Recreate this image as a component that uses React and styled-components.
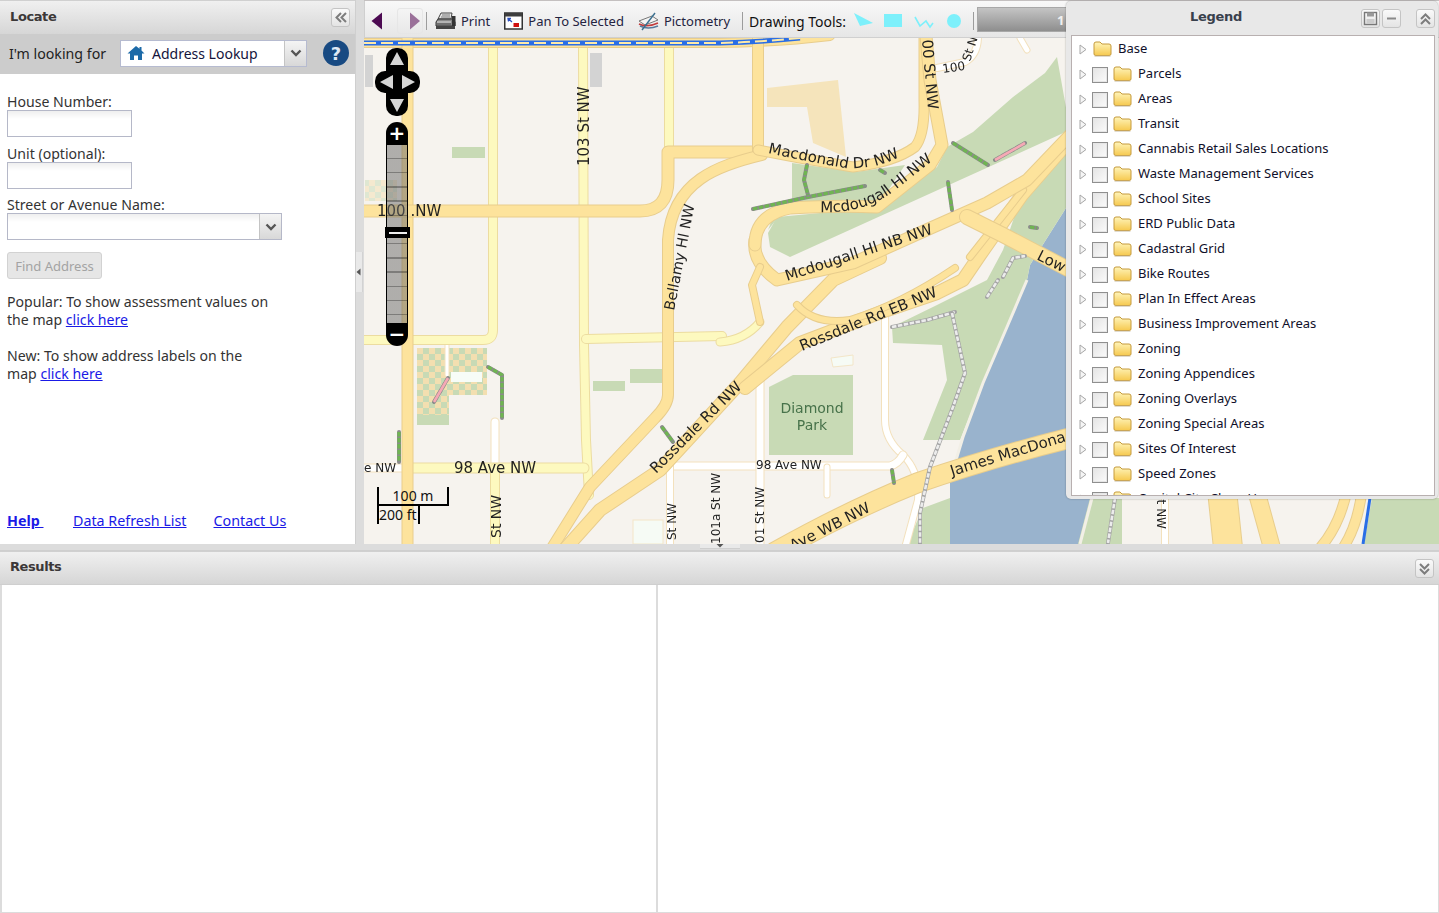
import React from 'react'
import styled, { createGlobalStyle } from 'styled-components'

const UI_FONT = '"Noto Sans", "DejaVu Sans", sans-serif'
const MAP_FONT = '"DejaVu Sans", sans-serif'

const legendLayers = [
    'Parcels',
    'Areas',
    'Transit',
    'Cannabis Retail Sales Locations',
    'Waste Management Services',
    'School Sites',
    'ERD Public Data',
    'Cadastral Grid',
    'Bike Routes',
    'Plan In Effect Areas',
    'Business Improvement Areas',
    'Zoning',
    'Zoning Appendices',
    'Zoning Overlays',
    'Zoning Special Areas',
    'Sites Of Interest',
    'Speed Zones',
    'Capital City Clean Up',
]

const GlobalStyle = createGlobalStyle`
    html, body {
        margin: 0;
        padding: 0;
        background: #dcdcdc;
    }

    body {
        font-family: ${UI_FONT};
        font-size: 14px;
        overflow: hidden;
    }
`

const Page = styled.div`
    width: 1439px;
    height: 913px;
    display: flex;
    flex-direction: column;
    background: #dcdcdc;
`

const TopRow = styled.div`
    height: 544px;
    display: flex;
    flex: none;
`

const LeftPanel = styled.aside`
    width: 356px;
    flex: none;
    display: flex;
    flex-direction: column;
    background: #fff;
    border-right: 1px solid #cfcfcf;
    box-sizing: border-box;
`

const PanelHeader = styled.div`
    height: ${p => p.$height || 34}px;
    flex: none;
    box-sizing: border-box;
    display: flex;
    align-items: center;
    justify-content: space-between;
    padding: 0 5px 0 10px;
    background: linear-gradient(#f0f0f0, #d6d6d6);
    border-top: 1px solid #d0d0d0;
`

const PanelTitle = styled.span`
    font-family: "DejaVu Sans", sans-serif;
    font-size: 13px;
    font-weight: bold;
    letter-spacing: -0.4px;
    color: #3c3838;
    padding-bottom: 3px;
`

const IconButton = styled.button`
    width: 19px;
    height: 19px;
    padding: 0;
    display: flex;
    align-items: center;
    justify-content: center;
    flex: none;
    background: linear-gradient(#fafafa, #e4e4e4);
    border: 1px solid #c4c4c4;
    border-radius: 3px;
    margin-left: ${p => p.$ml || 0}px;
`

const LookingBar = styled.div`
    height: 40px;
    flex: none;
    display: flex;
    align-items: center;
    background: #cccccc;
    padding: 0 0 2px 9px;
    box-sizing: border-box;
    color: #222;
    font-size: 14.2px;
`

const LookingLabel = styled.span`
    width: 111px;
    flex: none;
`

const LookupSelect = styled.div`
    width: 187px;
    height: 27px;
    display: flex;
    align-items: center;
    box-sizing: border-box;
    background: #fff;
    border: 1px solid #b6bbd0;
    padding-left: 6px;
    gap: 7px;
    color: #14143c;
`

const LookupText = styled.span`
    flex: 1;
    font-size: 14px;
`

const DropButton = styled.div`
    width: 22px;
    height: 100%;
    flex: none;
    display: flex;
    align-items: center;
    justify-content: center;
    box-sizing: border-box;
    background: linear-gradient(#f4f4f4, #d8d8d8);
    border-left: 1px solid #c4c4c4;
`

const HelpBadge = styled.div`
    width: 26px;
    height: 26px;
    border-radius: 50%;
    margin-left: 16px;
    background: #184a82;
    color: #dfe9f5;
    font-family: "DejaVu Sans", sans-serif;
    font-size: 18px;
    font-weight: bold;
    display: flex;
    align-items: center;
    justify-content: center;
`

const FormBody = styled.div`
    flex: 1;
    display: flex;
    flex-direction: column;
    padding: 20px 0 0 7px;
    color: #333;
    font-size: 14.1px;
`

const FieldLabel = styled.label`
    display: block;
    height: 16px;
    line-height: 16px;
`

const TextField = styled.div`
    width: ${p => p.$width || 125}px;
    height: 27px;
    flex: none;
    box-sizing: border-box;
    border: 1px solid #b5b8c8;
    background: linear-gradient(#efefef, #fff 8px);
    margin-bottom: ${p => p.$mb || 8}px;
    display: flex;
    justify-content: flex-end;
`

const FindButton = styled.button`
    width: 95px;
    height: 27px;
    flex: none;
    padding: 0;
    margin: 4px 0 14px;
    font-family: ${UI_FONT};
    font-size: 13px;
    color: #a3a3a3;
    background: #e6e6e6;
    border: 1px solid #d2d2d2;
    border-radius: 3px;
`

const Note = styled.p`
    width: 264px;
    margin: 0 0 18px;
    line-height: 18px;
`

const TextLink = styled.a`
    color: #1a1ae6;
    text-decoration: underline;
    font-weight: ${p => (p.$bold ? 'bold' : 'normal')};
`

const FooterLinks = styled.div`
    margin-top: auto;
    padding-bottom: 14px;
    display: flex;
    gap: 27px;
    font-size: 14.3px;
    line-height: 18px;
`

const HelpLink = styled(TextLink)`
    width: 39px;
`

const VerticalSplit = styled.div`
    width: 8px;
    flex: none;
    display: flex;
    align-items: center;
    background: #dcdcdc;
`

const SplitHandle = styled.div`
    width: 6px;
    height: 40px;
    display: flex;
    align-items: center;
    background: #e9e9e9;
    border-right: 1px solid #d2d2d2;
`

const MapPanel = styled.section`
    flex: 1;
    min-width: 0;
    position: relative;
    display: flex;
    flex-direction: column;
    border-top: 1px solid #c4c0c0;
    box-sizing: border-box;
`

const Toolbar = styled.div`
    height: 37px;
    flex: none;
    display: flex;
    align-items: center;
    overflow: hidden;
    box-sizing: border-box;
    padding-top: 4px;
    background: linear-gradient(#f8f8f8, #e6e6e6);
    border-bottom: 1px solid #d0d0d0;
    border-left: 1px solid #cfcfcf;
    font-size: 13px;
    color: #23233f;
`

const ToolItem = styled.div`
    display: flex;
    align-items: center;
    gap: 5px;
    flex: none;
    margin-left: ${p => p.$ml || 0}px;
`

const NavGhostButton = styled.div`
    width: 26px;
    height: 26px;
    display: flex;
    align-items: center;
    justify-content: flex-end;
    padding-right: 1px;
    flex: none;
    margin-left: ${p => p.$ml || 0}px;
    box-sizing: border-box;
    border: 1px solid #e6e6e6;
    border-radius: 3px;
`

const ToolDivider = styled.div`
    width: 1px;
    height: 18px;
    flex: none;
    background: #9c9c9c;
    margin-left: ${p => p.$ml || 0}px;
`

const DrawingLabel = styled.span`
    margin-left: 6px;
    font-size: 14px;
    color: #111;
`

const ProgressBox = styled.div`
    width: 130px;
    height: 25px;
    flex: none;
    margin-left: 3px;
    margin-top: -3px;
    box-sizing: border-box;
    padding-left: 79px;
    background: linear-gradient(#c4c4c4, #8e8e8e);
    border: 1px solid #a8a8a8;
    color: #f0f0f0;
    font-weight: bold;
    line-height: 24px;
`

const MapArea = styled.div`
    flex: 1;
    min-height: 0;
    position: relative;
    overflow: hidden;
    background: #f6f3ee;
`

const MapDrawing = styled.svg`
    display: block;
    width: 100%;
    height: 100%;
    filter: blur(0.3px);
`

const NavControl = styled.svg`
    position: absolute;
    left: 11px;
    top: 10px;
`

const ZoomBar = styled.div`
    position: absolute;
    left: 22px;
    top: 84px;
    width: 22px;
    height: 224px;
    display: flex;
    flex-direction: column;
`

const ZoomCap = styled.div`
    height: 23px;
    flex: none;
    background: #000;
    color: #fff;
    font-family: "DejaVu Sans", sans-serif;
    font-size: 20px;
    font-weight: bold;
    line-height: 23px;
    text-align: center;
    border-radius: ${p => (p.$bottom ? '0 0 11px 11px' : '11px 11px 0 0')};
`

const ZoomTrack = styled.div`
    flex: 1;
    box-sizing: border-box;
    border-left: 1px solid #000;
    border-right: 1px solid #000;
    background: repeating-linear-gradient(
        rgba(105, 105, 105, 0.5) 0,
        rgba(105, 105, 105, 0.5) 12.8px,
        rgba(60, 60, 60, 0.65) 12.8px,
        rgba(60, 60, 60, 0.65) 14.2px
    );
`

const ZoomHandle = styled.div`
    position: absolute;
    left: -1px;
    top: 105px;
    width: 25px;
    height: 11px;
    background: #000;
    display: flex;
    align-items: center;
    justify-content: center;

    &::after {
        content: '';
        width: 18px;
        height: 2px;
        background: #eee;
    }
`

const ScaleLine = styled.div`
    position: absolute;
    left: 13px;
    top: 449px;
    font-size: 14px;
    line-height: 18px;
    color: #111;
`

const ScaleMetric = styled.div`
    width: 72px;
    height: 19px;
    box-sizing: border-box;
    border: 2px solid #000;
    border-top: none;
    text-align: center;
`

const ScaleImperial = styled.div`
    width: 43px;
    height: 18px;
    box-sizing: border-box;
    border: 2px solid #000;
    border-top: none;
    border-bottom: none;
    white-space: nowrap;
    overflow: hidden;
`

const LegendWindow = styled.div`
    position: absolute;
    left: 702px;
    top: 0;
    width: 372px;
    height: 498px;
    box-sizing: border-box;
    display: flex;
    flex-direction: column;
    padding: 0 3px 3px 5px;
    background: #e8e8e8;
    border-radius: 5px;
    box-shadow: 0 0 2px rgba(0, 0, 0, 0.35);
`

const LegendHeader = styled.div`
    height: 34px;
    flex: none;
    position: relative;
    display: flex;
    align-items: center;
    justify-content: flex-end;
`

const LegendTitle = styled.span`
    position: absolute;
    left: 119px;
    top: 8px;
    font-family: "DejaVu Sans", sans-serif;
    font-size: 13px;
    font-weight: bold;
    letter-spacing: -0.3px;
    color: #38404c;
`

const LegendBody = styled.div`
    flex: 1;
    min-height: 0;
    overflow: hidden;
    background: #fff;
    border: 1px solid #b8b0b0;
`

const LayerRow = styled.div`
    height: 25px;
    display: flex;
    align-items: center;
    padding-left: 7px;
    color: #10102a;
    font-size: 13px;
    white-space: nowrap;

    > svg:first-child {
        margin-top: 2px;
    }
`

const BaseSpacer = styled.span`
    width: 6px;
    flex: none;
`

const LayerCheck = styled.span`
    width: 16px;
    height: 16px;
    flex: none;
    margin: 2px 5px 0 5px;
    box-sizing: border-box;
    border: 1px solid #8f8f8f;
    background: linear-gradient(135deg, #e4e4e4, #fbfbfb);
    box-shadow: inset 0 0 0 1px #e6e6e6;
`

const LayerName = styled.span`
    margin-left: 6px;
    padding-bottom: 1px;
`

const HorizontalSplit = styled.div`
    height: 6px;
    flex: none;
    display: flex;
    justify-content: center;
`

const SplitGrip = styled.div`
    width: 40px;
    height: 4px;
    background: #e9e9e9;
    border-bottom: 1px solid #cfcfcf;
    display: flex;
    justify-content: center;
`

const ResultsPanel = styled.section`
    flex: 1;
    min-height: 0;
    display: flex;
    flex-direction: column;
    border-top: 1px solid #cfcfcf;
    padding-bottom: 1px;
`

const ResultsBody = styled.div`
    flex: 1;
    display: grid;
    grid-template-columns: 654px 1fr;
    gap: 2px;
    padding: 0 1px 0 2px;
    border-top: 1px solid #cfcfcf;
    background: #dcdcdc;
`

const ResultsPane = styled.div`
    background: #fff;
`

const ChevronsIcon = ({ dir }) => {
    const paths = {
        left: 'M8 3 L3.5 7.5 L8 12 M13 3 L8.5 7.5 L13 12',
        up: 'M3 8 L7.5 3.5 L12 8 M3 13 L7.5 8.5 L12 13',
        down: 'M3 3 L7.5 7.5 L12 3 M3 8 L7.5 12.5 L12 8',
    }
    return (
        <svg width='15' height='15' viewBox='0 0 15 15'>
            <path d={paths[dir]} fill='none' stroke='#7d7d7d' strokeWidth='2' />
        </svg>
    )
}

const DropArrow = () => (
    <svg width='12' height='8' viewBox='0 0 12 8'>
        <path d='M1.5 1.5 L6 6 L10.5 1.5' fill='none' stroke='#555' strokeWidth='2.4' />
    </svg>
)

const HomeIcon = () => (
    <svg width='18' height='16' viewBox='0 0 18 16'>
        <path d='M9 1 L0.5 8.5 L3 8.5 L3 15 L7 15 L7 10.5 L11 10.5 L11 15 L15 15 L15 8.5 L17.5 8.5 L14.5 5.5 L14.5 2 L12.5 2 L12.5 3.7 Z' fill='#1c6aa8' />
    </svg>
)

const ArrowLeftIcon = () => (
    <svg width='12' height='18' viewBox='0 0 12 18'>
        <path d='M11 0.5 L0.5 9 L11 17.5 Z' fill='#4c0a52' />
    </svg>
)

const ArrowRightIcon = () => (
    <svg width='12' height='18' viewBox='0 0 12 18'>
        <path d='M1 0.5 L11 9 L1 17.5 Z' fill='#9a7099' />
    </svg>
)

const PrintIcon = () => (
    <svg width='21' height='18' viewBox='0 0 21 18'>
        <path d='M6 1 L17 1 L16 7 L3 7 Z' fill='#e8e8e8' stroke='#444' />
        <path d='M7 3 L15 3 M6 5 L15 5' stroke='#777' />
        <path d='M3 7 L18 7 L20 10 L20 14 L1 14 L1 10 Z' fill='#8a8a8a' stroke='#333' />
        <rect x='17' y='4' width='3.5' height='10' fill='#333' />
        <rect x='1' y='14' width='19' height='3' fill='#444' />
        <path d='M2 10 L16 10' stroke='#ddd' />
        <path d='M2 12 L16 12' stroke='#555' />
    </svg>
)

const PanIcon = () => (
    <svg width='19' height='18' viewBox='0 0 19 18'>
        <rect x='0.75' y='1' width='17.5' height='16' fill='#fff' stroke='#333' strokeWidth='1.5' />
        <rect x='1' y='1' width='17' height='3.5' fill='#3d3d3d' />
        <path d='M4 6.5 L8 10 M4.5 9.5 L4 6.5 L7 6.5' stroke='#2a4fc0' fill='none' strokeWidth='1.3' />
        <rect x='9.5' y='11' width='5.5' height='4' fill='#d01010' />
    </svg>
)

const PictometryIcon = () => (
    <svg width='21' height='19' viewBox='0 0 21 19'>
        <path d='M1 9 L14 4 L20 8 L7 13 Z' fill='#f4f4f4' stroke='#777' />
        <path d='M1 12 Q9 16 20 11' fill='none' stroke='#c23b3b' strokeWidth='1.4' />
        <path d='M2 14 Q10 18 20 14' fill='none' stroke='#557a9c' strokeWidth='1.4' />
        <path d='M4 18 L17 1' stroke='#3a6f8f' strokeWidth='1.4' />
    </svg>
)

const DrawingTools = () => (
    <svg width='112' height='20' viewBox='0 0 112 20'>
        <path d='M0 2 L19 12 L6 15 Z' fill='#7df0fb' />
        <rect x='30' y='3' width='18' height='13' fill='#7df0fb' />
        <path d='M61 6 L66 15 L72 10 L76 16 L79 12' fill='none' stroke='#7df0fb' strokeWidth='1.6' />
        <circle cx='100' cy='10' r='7' fill='#7df0fb' />
    </svg>
)

const Folder = () => (
    <svg width='19' height='17' viewBox='0 0 19 17'>
        <defs>
            <linearGradient id='folderFill' x1='0' y1='0' x2='0' y2='1'>
                <stop offset='0' stopColor='#fff5bb' />
                <stop offset='1' stopColor='#f6c94f' />
            </linearGradient>
        </defs>
        <path d='M1 4 Q1 2 3 2 L7 2 L9 4 L16 4 Q18 4 18 6 L18 14 Q18 15.5 16 15.5 L3 15.5 Q1 15.5 1 14 Z' fill='url(#folderFill)' stroke='#c59a3c' />
        <path d='M1.5 16.3 L17.5 16.3' stroke='#d9d3c4' />
    </svg>
)

const TreeArrow = () => (
    <svg width='8' height='11' viewBox='0 0 8 11'>
        <path d='M1 1 L7 5.5 L1 10 Z' fill='#f6f6f6' stroke='#a6a6a6' />
    </svg>
)

const SaveIcon = () => (
    <svg width='15' height='15' viewBox='0 0 15 15'>
        <rect x='1.5' y='1.5' width='12' height='12' fill='none' stroke='#777' strokeWidth='1.4' />
        <rect x='4' y='1.5' width='7' height='4' fill='#999' />
        <rect x='3.5' y='8' width='8' height='5' fill='#ccc' />
    </svg>
)

const MinusIcon = () => (
    <svg width='15' height='15' viewBox='0 0 15 15'>
        <path d='M3 7.5 L12 7.5' stroke='#8a8a8a' strokeWidth='2' />
    </svg>
)

const Road = ({ d, w = 10, kind = 'major' }) => {
    const colors = {
        major: ['#e8cd8d', '#fde39c'],
        minor: ['#ecdca0', '#fdf9bf'],
        white: ['#f3e1bd', '#ffffff'],
    }
    const [casing, fill] = colors[kind]
    return (
        <>
            <path d={d} fill='none' stroke={casing} strokeWidth={w + 2} strokeLinejoin='round' strokeLinecap='round' />
            <path d={d} fill='none' stroke={fill} strokeWidth={w} strokeLinejoin='round' strokeLinecap='round' />
        </>
    )
}

const Trail = ({ d, kind = 'green' }) => {
    const colors = {
        green: ['#8b8b8b', '#6fb552'],
        grey: ['#a4a4a4', '#ececec'],
        pink: ['#8b8b8b', '#f6a9b5'],
    }
    const [edge, fill] = colors[kind]
    return (
        <>
            <path d={d} fill='none' stroke={edge} strokeWidth='4' strokeDasharray={kind === 'pink' ? '6 2' : 'none'} strokeLinecap='round' strokeLinejoin='round' />
            <path d={d} fill='none' stroke={fill} strokeWidth={kind === 'green' ? 3.2 : 2.6} strokeDasharray={kind === 'pink' ? 'none' : '4.5 1.5'} strokeLinejoin='round' />
        </>
    )
}

const MapLabel = ({ x, y, size = 15, rotate = 0, color = '#222', anchor = 'start', children }) => (
    <text
        x={x}
        y={y}
        fontSize={size}
        fill={color}
        textAnchor={anchor}
        transform={rotate ? `rotate(${rotate} ${x} ${y})` : undefined}
    >
        {children}
    </text>
)

const StreetMap = () => (
    <MapDrawing viewBox='364 38 1075 506' preserveAspectRatio='none' fontFamily={MAP_FONT}>
        <defs>
            <pattern id='schoolCheck' x='417' y='348' width='12' height='12' patternUnits='userSpaceOnUse'>
                <rect width='12' height='12' fill='#c8dab5' />
                <rect width='6' height='6' fill='#f3dfb0' />
                <rect x='6' y='6' width='6' height='6' fill='#f3dfb0' />
            </pattern>
            <path id='macdonaldCurve' d='M768 153 Q800 160 845 168 Q880 170 905 153' />
            <path id='mcdougallCurve' d='M820 212 Q860 214 890 194 L940 155' />
        </defs>

        <rect x='364' y='38' width='1075' height='506' fill='#f6f3ee' />

        {/* water and parks */}
        <path d='M1066 208 L1030 265 L1027 280 L1007 327 L983 383 L963 437 L950 480 L950 544 L1080 544 L1092 500 L1092 200 Z' fill='#99b3cd' />
        <path d='M1057 57 L1045 73 L1013 97 L973 132 L947 147 L937 167 L877 210 L820 213 L777 217 L768 233 L770 247 L790 257 L1070 130 Z' fill='#c8dab5' />
        <path d='M792 163 L855 172 L905 165 L877 207 L820 205 L775 212 L768 230 L792 200 Z' fill='#c8dab5' />
        <path d='M892 327 L937 305 L987 280 L1003 250 L1020 200 L1066 150 L1066 208 L1030 265 L1027 280 L1007 327 L983 383 L960 440 L923 440 L947 380 L942 345 L893 343 Z' fill='#c8dab5' />
        <path d='M769 387 L793 375 L853 375 L853 455 L769 455 Z' fill='#c8dab5' />
        <path d='M923 508 L950 498 L950 544 L907 544 Z' fill='#c8dab5' />
        <path d='M1090 498 L1122 498 L1122 544 L1078 544 Z' fill='#c8dab5' />
        <path d='M1372 498 L1439 498 L1439 544 L1364 544 Z' fill='#c8dab5' />
        <path d='M1027 280 L1007 327 L983 383 L963 437 L950 480' fill='none' stroke='#f2efe6' strokeWidth='3' />
        <path d='M1092 498 L1080 544' fill='none' stroke='#f2efe6' strokeWidth='3' />

        <path d='M767 88 L838 80 L846 157 L813 143 L807 107 L767 107 Z' fill='#f5e4bb' />
        <rect x='590' y='53' width='12' height='34' fill='#d3d3d3' />
        <rect x='365' y='55' width='8' height='32' fill='#d3d3d3' />
        <rect x='452' y='147' width='33' height='11' fill='#c8dab5' />
        <rect x='593' y='381' width='32' height='10' fill='#c8dab5' />
        <rect x='630' y='369' width='32' height='14' fill='#c8dab5' />
        <rect x='365' y='180' width='32' height='21' fill='url(#schoolCheck)' opacity='0.5' />
        <path d='M417 348 L487 348 L487 395 L449 395 L449 415 L417 415 Z' fill='url(#schoolCheck)' />
        <rect x='417' y='415' width='32' height='10' fill='#c8dab5' />
        <rect x='451' y='372' width='31' height='10' fill='#f7fcf7' />
        <rect x='633' y='520' width='30' height='24' fill='#f6fbf5' stroke='#f3e6c8' />
        <path d='M831 358 L853 355 L853 365 L833 367 Z' fill='#f6fbf5' stroke='#f3e6c8' />

        {/* local streets */}
        <Road d='M885 312 L885 420 Q885 440 903 455 Q920 472 918 500 L905 548' w={6} kind='white' />
        <Road d='M670 466 L890 466 Q898 464 903 455' w={7} kind='white' />
        <Road d='M760 378 L760 548' w={7} kind='white' />
        <Road d='M670 466 L670 548' w={6} kind='white' />
        <Road d='M827 467 L827 495' w={5} kind='white' />
        <Road d='M495 422 L495 465' w={7} kind='white' />
        <Road d='M447 345 L447 375' w={3} kind='white' />
        <Road d='M364 468 L402 468' w={7} kind='white' />
        <Road d='M937 68 L965 62 Q978 55 978 36' w={6} kind='white' />
        <Road d='M1020 38 L1027 50' w={5} kind='white' />
        <Road d='M1165 490 L1165 548' w={6} kind='white' />

        <Road d='M493 47 L493 330 Q493 340 483 340 L364 340' w={8} kind='minor' />
        <Road d='M583 47 L584 345 L586 440 L589 495' w={8} kind='minor' />
        <Road d='M669 38 L669 152' w={8} kind='minor' />
        <Road d='M586 339 L722 336' w={8} kind='minor' />
        <Road d='M413 468 L584 468' w={9} kind='minor' />
        <Road d='M495 468 L495 548' w={8} kind='minor' />
        <Road d='M720 342 Q745 340 760 322' w={7} kind='minor' />

        {/* arterial roads */}
        <Road d='M364 43 L720 43 Q780 42 830 36' w={8} />
        <Road d='M407.5 38 L407.5 548' w={10} />
        <Road d='M364 211 L640 211 Q668 211 668 180 L668 152 L762 152' w={11} />
        <Road d='M758 38 L758 152' w={10} />
        <Road d='M762 155 C720 165 672 180 668 240 L668 395 Q668 405 655 418 L590 487 L552 548' w={10} />
        <Road d='M566 548 L600 510 L660 470 L740 383 L787 327 L833 280 L880 258' w={12} />
        <Road d='M745 388 L800 343 L887 310 L937 293 L963 280 L980 255 L1022 195 L1070 140' w={12} />
        <Road d='M970 257 L1023 190' w={6} />
        <Road d='M755 240 Q752 262 777 280 L853 263 L933 227 L987 203 L1027 180 L1070 135' w={11} />
        <Road d='M797 305 Q815 325 850 320 Q900 305 955 268' w={6} />
        <Road d='M760 322 L752 285 L760 267' w={6} />
        <Road d='M967 217 L1003 235 L1070 270' w={14} />
        <Road d='M758 150 L800 158 L853 167 Q895 162 915 147 Q925 135 924 100 L924 36' w={9} />
        <Road d='M926 36 L930 80 L942 145 L930 165 L877 207 Q840 205 790 208 Q755 215 755 245' w={11} />
        <Road d='M775 552 Q850 510 917 483 Q990 458 1070 438' w={19} />
        <Road d='M1222 490 L1228 548' w={28} />
        <Road d='M1256 490 L1272 548' w={16} />
        <Road d='M1347 490 Q1340 525 1320 548' w={9} />
        <Road d='M1362 490 Q1358 525 1343 548' w={9} />

        {/* expressway line along the top */}
        <path d='M364 43 L720 43 Q760 42 800 38' fill='none' stroke='#2a6ee6' strokeWidth='5' />
        <path d='M364 43 L720 43 Q760 42 800 38' fill='none' stroke='#fde9a8' strokeWidth='2' strokeDasharray='12 5' />
        <path d='M1370 498 L1363 544' fill='none' stroke='#2a6ee6' strokeWidth='3' />

        {/* footpaths */}
        <Trail d='M753 209 L808 197 L865 186' />
        <Trail d='M807 165 L804 180 L808 195' />
        <Trail d='M953 143 L988 165' />
        <Trail d='M948 182 L952 210' />
        <Trail d='M488 367 L502 375 L502 418' />
        <Trail d='M399 432 L399 462' />
        <Trail d='M662 427 L673 442' />
        <Trail d='M892 470 L894 483' />
        <Trail d='M880 170 L885 173' />
        <Trail d='M1030 227 L1037 228' />
        <Trail d='M892 327 L927 320 L955 312' kind='grey' />
        <Trail d='M952 313 L965 373 L953 407 L930 467 L920 513 L920 544' kind='grey' />
        <Trail d='M987 297 L998 280' kind='grey' />
        <Trail d='M1003 277 L1013 258 L1025 256' kind='grey' />
        <Trail d='M1115 498 L1108 543' kind='grey' />
        <Trail d='M995 160 L1025 143' kind='pink' />
        <Trail d='M434 402 L448 378' kind='pink' />

        {/* street names */}
        <MapLabel x={589} y={166} rotate={-90}>103 St NW</MapLabel>
        <MapLabel x={377} y={216}>100 .NW</MapLabel>
        <MapLabel x={674} y={311} rotate={-79} size={14.5}>Bellamy Hl NW</MapLabel>
        <text fontSize='15' fill='#222'>
            <textPath href='#macdonaldCurve'>Macdonald Dr NW</textPath>
        </text>
        <text fontSize='15' fill='#222'>
            <textPath href='#mcdougallCurve'>Mcdougall Hl NW</textPath>
        </text>
        <MapLabel x={787} y={281} rotate={-18}>Mcdougall Hl NB NW</MapLabel>
        <MapLabel x={1036} y={259} rotate={27}>Low</MapLabel>
        <MapLabel x={802} y={351} rotate={-22}>Rossdale Rd EB NW</MapLabel>
        <MapLabel x={656} y={474} rotate={-45}>Rossdale Rd NW</MapLabel>
        <MapLabel x={812} y={413} size={14} color='#47724a' anchor='middle'>Diamond</MapLabel>
        <MapLabel x={812} y={430} size={14} color='#47724a' anchor='middle'>Park</MapLabel>
        <MapLabel x={454} y={473}>98 Ave NW</MapLabel>
        <MapLabel x={364} y={472} size={12}>e NW</MapLabel>
        <MapLabel x={756} y={469} size={12}>98 Ave NW</MapLabel>
        <MapLabel x={501} y={538} size={14} rotate={-90}>St NW</MapLabel>
        <MapLabel x={676} y={540} size={12} rotate={-90}>St NW</MapLabel>
        <MapLabel x={720} y={544} size={12} rotate={-90}>101a St NW</MapLabel>
        <MapLabel x={764} y={543} size={12} rotate={-90}>01 St NW</MapLabel>
        <MapLabel x={922} y={40} rotate={85}>00 St NW</MapLabel>
        <MapLabel x={943} y={73} size={12} rotate={-8}>100</MapLabel>
        <MapLabel x={970} y={62} size={12} rotate={-72}>St N</MapLabel>
        <MapLabel x={952} y={476} rotate={-17}>James MacDona</MapLabel>
        <MapLabel x={783} y={556} rotate={-27}>r Ave WB NW</MapLabel>
        <MapLabel x={1157} y={492} size={12} rotate={90}>St NW</MapLabel>
    </MapDrawing>
)

const App = () => (
    <Page>
        <GlobalStyle />
        <TopRow>
            <LeftPanel>
                <PanelHeader>
                    <PanelTitle>Locate</PanelTitle>
                    <IconButton><ChevronsIcon dir='left' /></IconButton>
                </PanelHeader>
                <LookingBar>
                    <LookingLabel>I'm looking for</LookingLabel>
                    <LookupSelect>
                        <HomeIcon />
                        <LookupText>Address Lookup</LookupText>
                        <DropButton><DropArrow /></DropButton>
                    </LookupSelect>
                    <HelpBadge>?</HelpBadge>
                </LookingBar>
                <FormBody>
                    <FieldLabel>House Number:</FieldLabel>
                    <TextField $mb={9} />
                    <FieldLabel>Unit (optional):</FieldLabel>
                    <TextField />
                    <FieldLabel>Street or Avenue Name:</FieldLabel>
                    <TextField $width={275}><DropButton><DropArrow /></DropButton></TextField>
                    <FindButton>Find Address</FindButton>
                    <Note>Popular: To show assessment values on the map <TextLink href='#'>click here</TextLink></Note>
                    <Note>New: To show address labels on the map <TextLink href='#'>click here</TextLink></Note>
                    <FooterLinks>
                        <HelpLink href='#' $bold>Help&nbsp;</HelpLink>
                        <TextLink href='#'>Data Refresh List</TextLink>
                        <TextLink href='#'>Contact Us</TextLink>
                    </FooterLinks>
                </FormBody>
            </LeftPanel>

            <VerticalSplit>
                <SplitHandle>
                    <svg width='5' height='8' viewBox='0 0 5 8'>
                        <path d='M0.5 4 L4.5 0.5 L4.5 7.5 Z' fill='#555' />
                    </svg>
                </SplitHandle>
            </VerticalSplit>

            <MapPanel>
                <Toolbar>
                    <ToolItem $ml={6}><ArrowLeftIcon /></ToolItem>
                    <NavGhostButton $ml={14}><ArrowRightIcon /></NavGhostButton>
                    <ToolDivider $ml={3} />
                    <ToolItem $ml={8}><PrintIcon />Print</ToolItem>
                    <ToolItem $ml={14}><PanIcon />Pan To Selected</ToolItem>
                    <ToolItem $ml={14}><PictometryIcon />Pictometry</ToolItem>
                    <ToolDivider $ml={12} />
                    <DrawingLabel>Drawing Tools:</DrawingLabel>
                    <ToolItem $ml={8}><DrawingTools /></ToolItem>
                    <ToolDivider $ml={7} />
                    <ProgressBox>1</ProgressBox>
                </Toolbar>
                <MapArea>
                    <StreetMap />
                    <NavControl width='46' height='70' viewBox='0 0 46 70'>
                        <rect x='11' y='0' width='22' height='68' rx='10' fill='#000' />
                        <rect x='0' y='23' width='45' height='22' rx='10' fill='#000' />
                        <path d='M22 4 L29 17 L15 17 Z M22 64 L29 51 L15 51 Z M5 34 L18 27 L18 41 Z M40 34 L27 27 L27 41 Z' fill='#d6d6d6' />
                    </NavControl>
                    <ZoomBar>
                        <ZoomCap>+</ZoomCap>
                        <ZoomTrack />
                        <ZoomHandle />
                        <ZoomCap $bottom>−</ZoomCap>
                    </ZoomBar>
                    <ScaleLine>
                        <ScaleMetric>100 m</ScaleMetric>
                        <ScaleImperial>200 ft</ScaleImperial>
                    </ScaleLine>
                </MapArea>
                <LegendWindow>
                    <LegendHeader>
                        <LegendTitle>Legend</LegendTitle>
                        <IconButton><SaveIcon /></IconButton>
                        <IconButton $ml={2}><MinusIcon /></IconButton>
                        <IconButton $ml={15}><ChevronsIcon dir='up' /></IconButton>
                    </LegendHeader>
                    <LegendBody>
                        <LayerRow>
                            <TreeArrow />
                            <BaseSpacer />
                            <Folder />
                            <LayerName>Base</LayerName>
                        </LayerRow>
                        {legendLayers.map(name => (
                            <LayerRow key={name}>
                                <TreeArrow />
                                <LayerCheck />
                                <Folder />
                                <LayerName>{name}</LayerName>
                            </LayerRow>
                        ))}
                    </LegendBody>
                </LegendWindow>
            </MapPanel>
        </TopRow>

        <HorizontalSplit>
            <SplitGrip>
                <svg width='8' height='4' viewBox='0 0 8 4'>
                    <path d='M0.5 0 L7.5 0 L4 3.5 Z' fill='#555' />
                </svg>
            </SplitGrip>
        </HorizontalSplit>

        <ResultsPanel>
            <PanelHeader $height={33}>
                <PanelTitle>Results</PanelTitle>
                <IconButton><ChevronsIcon dir='down' /></IconButton>
            </PanelHeader>
            <ResultsBody>
                <ResultsPane />
                <ResultsPane />
            </ResultsBody>
        </ResultsPanel>
    </Page>
)

export default App
